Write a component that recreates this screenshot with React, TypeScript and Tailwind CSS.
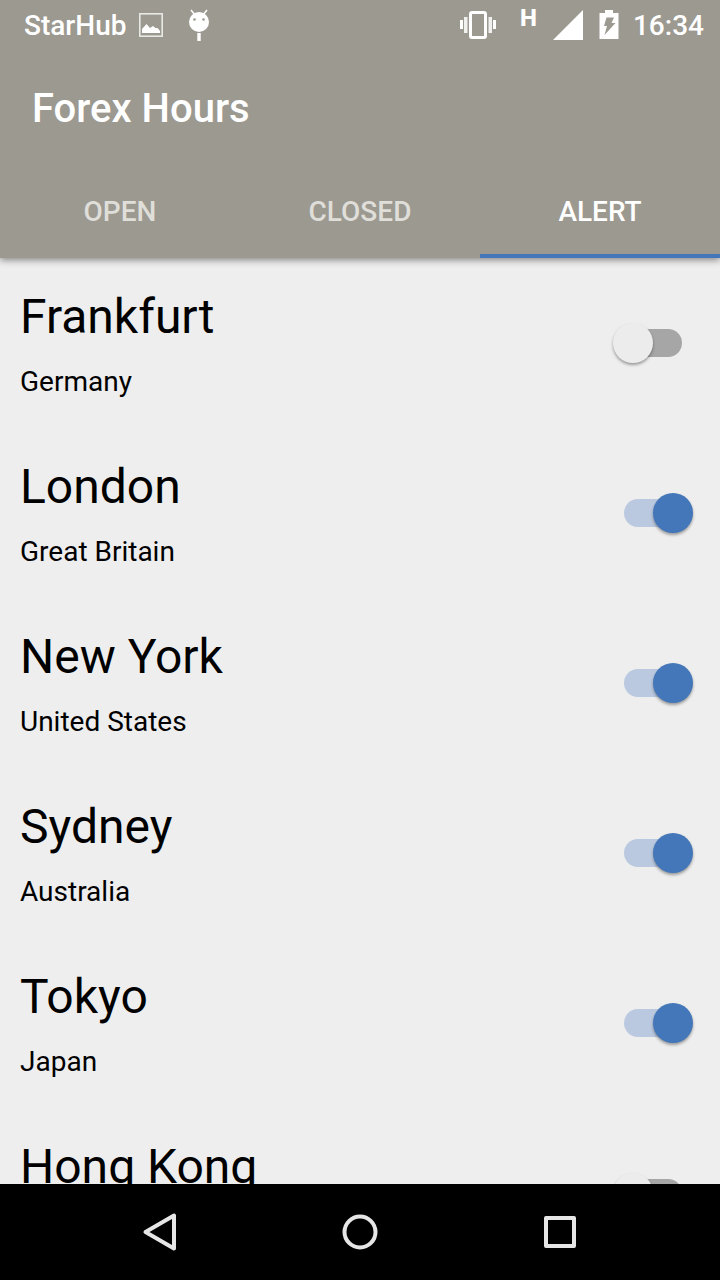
import { useState } from 'react';

const TABS = ['Open', 'Closed', 'Alert'] as const;

interface Market {
  city: string;
  country: string;
  alert: boolean;
}

const MARKETS: Market[] = [
  { city: 'Frankfurt', country: 'Germany', alert: false },
  { city: 'London', country: 'Great Britain', alert: true },
  { city: 'New York', country: 'United States', alert: true },
  { city: 'Sydney', country: 'Australia', alert: true },
  { city: 'Tokyo', country: 'Japan', alert: true },
  { city: 'Hong Kong', country: 'China', alert: false },
];

function StatusBar() {
  return (
    <div className="flex h-[52px] shrink-0 items-center justify-between pr-4 pl-6 text-[28px] leading-8 font-medium">
      <div className="flex items-center">
        <span>StarHub</span>
        {/* Screenshot saved */}
        <svg className="mb-0.5 ml-[13px] h-6 w-6" viewBox="0 0 24 24" fill="none" aria-hidden="true">
          <rect x=".8" y=".8" width="22.400" height="22.400" stroke="#e8e8e4" strokeWidth="1.600" />
          <path d="M3 20v-4l4.500-5 3.500 4 3-2 2.500 2h2l2.500 3v2z" fill="#fff" />
        </svg>
        {/* Android notification */}
        <svg className="mb-0.5 ml-6 h-8 w-6" viewBox="0 0 24 32" fill="#fff" aria-hidden="true">
          <path d="M4 1l4 5M20 1l-4 5" stroke="#fff" strokeWidth="1.500" />
          <circle cx="12" cy="13" r="10" />
          <circle cx="7.500" cy="10.500" r="1.300" fill="#9c9991" />
          <circle cx="16.500" cy="10.500" r="1.300" fill="#9c9991" />
          <rect x="10.300" y="24" width="3.400" height="8" />
        </svg>
      </div>

      <div className="flex items-center">
        {/* Vibrate */}
        <svg className="mb-0.5 h-7 w-9" viewBox="0 0 36 28" fill="#fff" aria-hidden="true">
          <rect x="10.500" y="1.500" width="15" height="25" rx="1.500" fill="none" stroke="#fff" strokeWidth="3" />
          <rect x="0" y="9" width="3" height="9" />
          <rect x="4" y="6" width="3.500" height="16" opacity=".85" />
          <rect x="28.500" y="6" width="3.500" height="16" opacity=".85" />
          <rect x="33" y="9" width="3" height="9" />
        </svg>
        <span className="mb-4 ml-6 text-2xl font-extrabold">H</span>
        {/* Signal */}
        <svg className="mb-0.5 ml-4 h-[30px] w-[30px]" viewBox="0 0 30 30" fill="#fff" aria-hidden="true">
          <path d="M30 0v30H0z" />
        </svg>
        {/* Charging battery */}
        <svg className="mb-0.5 ml-4 h-[30px] w-5" viewBox="0 0 20 30" aria-hidden="true">
          <path d="M6 0h8v3h5.500v26H.5V3H6z" fill="#fff" />
          <path d="M7.500 7.500h7.500l-2.500 5.500h4L5.500 25l2.500-9H5z" fill="#9c9991" />
        </svg>
        <span className="ml-[14px]">16:34</span>
      </div>
    </div>
  );
}

function MarketRow({ market, onToggle }: { market: Market; onToggle: () => void }) {
  return (
    <li className="flex h-[170px] items-center justify-between pr-[27px] pl-5">
      <label htmlFor={market.city} className="flex flex-col gap-[21px] pt-px">
        <span className="text-5xl leading-[56px]">{market.city}</span>
        <span className="text-[28px] leading-8">{market.country}</span>
      </label>
      <input
        id={market.city}
        type="checkbox"
        role="switch"
        checked={market.alert}
        onChange={onToggle}
        className="relative h-10 w-20 shrink-0 cursor-pointer appearance-none before:absolute before:top-1.5 before:left-[11px] before:h-7 before:w-[58px] before:rounded-full before:bg-[#a6a6a6] after:absolute after:top-0 after:left-0 after:size-10 after:rounded-full after:bg-[#ececec] after:shadow-[0_2px_3px_rgba(0,0,0,0.35)] checked:before:bg-[#bac9e0] checked:after:left-10 checked:after:bg-[#4377b9]"
      />
    </li>
  );
}

function NavBar() {
  return (
    <nav className="flex h-24 shrink-0 items-center justify-center gap-[152px] bg-black">
      <button type="button" aria-label="Back">
        <svg className="size-12" viewBox="0 0 48 48" fill="none" stroke="#e6e6e6" strokeWidth="4" strokeLinejoin="round">
          <path d="M38 7.500v33L9.500 24z" />
        </svg>
      </button>
      <button type="button" aria-label="Home">
        <svg className="size-12" viewBox="0 0 48 48" fill="none" stroke="#e6e6e6" strokeWidth="4">
          <circle cx="24" cy="24" r="15.500" />
        </svg>
      </button>
      <button type="button" aria-label="Recent apps">
        <svg className="size-12" viewBox="0 0 48 48" fill="none" stroke="#e6e6e6" strokeWidth="4" strokeLinejoin="round">
          <rect x="10" y="10" width="28" height="28" />
        </svg>
      </button>
    </nav>
  );
}

export default function App() {
  const [tab, setTab] = useState<string>('Alert');
  const [markets, setMarkets] = useState(MARKETS);

  const toggle = (city: string) =>
    setMarkets((prev) => prev.map((m) => (m.city === city ? { ...m, alert: !m.alert } : m)));

  return (
    <div className="flex h-screen flex-col bg-[#eeeeee] font-['Roboto',sans-serif] text-black">
      <header className="z-10 shrink-0 bg-[#9c9991] text-white shadow-[0_2px_7px_rgba(0,0,0,0.45)]">
        <StatusBar />
        <h1 className="flex h-[114px] items-center px-8 text-[40px] leading-[48px] font-medium">
          Forex Hours
        </h1>
        <div role="tablist" className="grid h-[92px] grid-cols-3">
          {TABS.map((name) => (
            <button
              key={name}
              type="button"
              role="tab"
              aria-selected={tab === name}
              onClick={() => setTab(name)}
              className={`border-y-4 border-t-transparent text-[28px] leading-8 font-medium uppercase ${
                tab === name ? 'border-b-[#4377b9] text-white' : 'border-b-transparent text-[#dfded9]'
              }`}
            >
              {name}
            </button>
          ))}
        </div>
      </header>

      <ul className="min-h-0 flex-1 overflow-hidden">
        {markets.map((market) => (
          <MarketRow key={market.city} market={market} onToggle={() => toggle(market.city)} />
        ))}
      </ul>

      <NavBar />
    </div>
  );
}
